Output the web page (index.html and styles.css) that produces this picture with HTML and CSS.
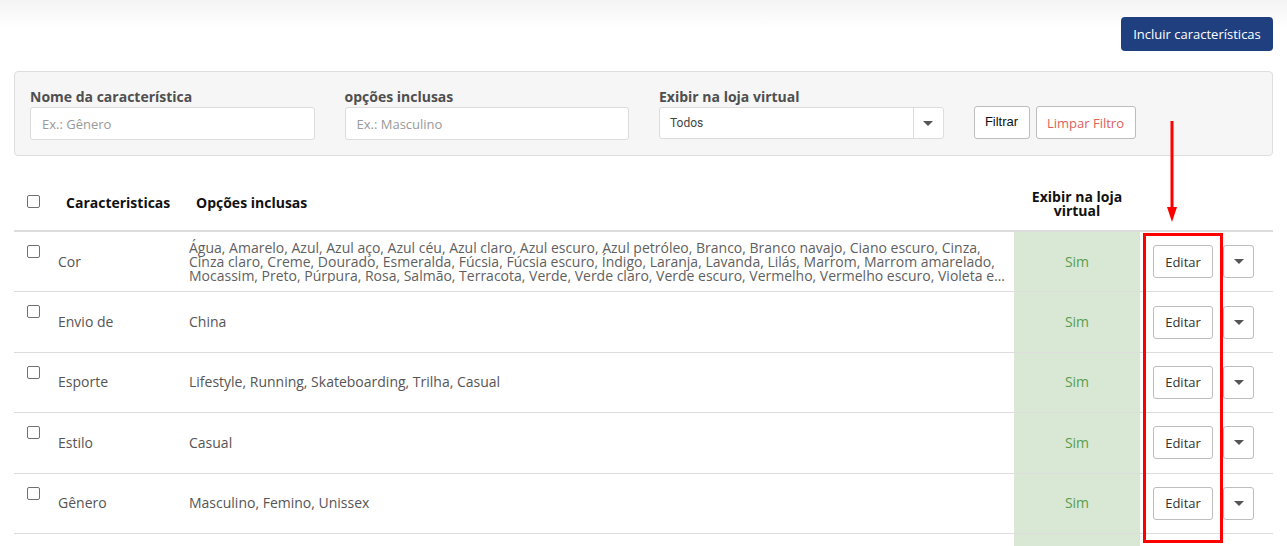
FILE: index.html
```html
<!DOCTYPE html>
<html lang="pt-BR">
<head>
  <meta charset="UTF-8">
  <meta name="viewport" content="width=device-width, initial-scale=1.0">
  <title>Características</title>
  <link rel="stylesheet" href="styles.css">
</head>
<body>
  <div class="page">
    <div class="toolbar">
      <button class="btn-primary">Incluir características</button>
    </div>

    <form class="filters">
      <div class="field">
        <label for="nome">Nome da característica</label>
        <input type="text" id="nome" placeholder="Ex.: Gênero">
      </div>
      <div class="field">
        <label for="opcoes">opções inclusas</label>
        <input type="text" id="opcoes" placeholder="Ex.: Masculino">
      </div>
      <div class="field">
        <label>Exibir na loja virtual</label>
        <div class="select">
          <span class="select-value">Todos</span>
          <span class="select-caret"><span class="caret"></span></span>
        </div>
      </div>
      <div class="filter-actions">
        <button type="button" class="btn btn-filter">Filtrar</button>
        <button type="button" class="btn btn-clear">Limpar Filtro</button>
      </div>
    </form>

    <table class="grid">
      <colgroup>
        <col class="c-check">
        <col class="c-name">
        <col class="c-options">
        <col class="c-show">
        <col class="c-actions">
      </colgroup>
      <thead>
        <tr>
          <th class="check"><input type="checkbox"></th>
          <th>Caracteristicas</th>
          <th>Opções inclusas</th>
          <th class="center">Exibir na loja<br>virtual</th>
          <th></th>
        </tr>
      </thead>
      <tbody>
        <tr>
          <td class="check"><input type="checkbox"></td>
          <td>Cor</td>
          <td><div class="clamp">Água, Amarelo, Azul, Azul aço, Azul céu, Azul claro, Azul escuro, Azul petróleo, Branco, Branco navajo, Ciano escuro, Cinza, Cinza claro, Creme, Dourado, Esmeralda, Fúcsia, Fúcsia escuro, Índigo, Laranja, Lavanda, Lilás, Marrom, Marrom amarelado, Mocassim, Preto, Púrpura, Rosa, Salmão, Terracota, Verde, Verde claro, Verde escuro, Vermelho, Vermelho escuro, Violeta e Xadrez</div></td>
          <td class="show">Sim</td>
          <td class="actions"><div class="btn-row"><button class="btn btn-edit">Editar</button><button class="btn btn-more"><span class="caret"></span></button></div></td>
        </tr>
        <tr>
          <td class="check"><input type="checkbox"></td>
          <td>Envio de</td>
          <td>China</td>
          <td class="show">Sim</td>
          <td class="actions"><div class="btn-row"><button class="btn btn-edit">Editar</button><button class="btn btn-more"><span class="caret"></span></button></div></td>
        </tr>
        <tr>
          <td class="check"><input type="checkbox"></td>
          <td>Esporte</td>
          <td>Lifestyle, Running, Skateboarding, Trilha, Casual</td>
          <td class="show">Sim</td>
          <td class="actions"><div class="btn-row"><button class="btn btn-edit">Editar</button><button class="btn btn-more"><span class="caret"></span></button></div></td>
        </tr>
        <tr>
          <td class="check"><input type="checkbox"></td>
          <td>Estilo</td>
          <td>Casual</td>
          <td class="show">Sim</td>
          <td class="actions"><div class="btn-row"><button class="btn btn-edit">Editar</button><button class="btn btn-more"><span class="caret"></span></button></div></td>
        </tr>
        <tr>
          <td class="check"><input type="checkbox"></td>
          <td>Gênero</td>
          <td>Masculino, Femino, Unissex</td>
          <td class="show">Sim</td>
          <td class="actions"><div class="btn-row"><button class="btn btn-edit">Editar</button><button class="btn btn-more"><span class="caret"></span></button></div></td>
        </tr>
        <tr>
          <td class="check"><input type="checkbox"></td>
          <td>Tamanho</td>
          <td>34, 35, 36, 37, 38, 39, 40, 41, 42</td>
          <td class="show">Sim</td>
          <td class="actions"><div class="btn-row"><button class="btn btn-edit">Editar</button><button class="btn btn-more"><span class="caret"></span></button></div></td>
        </tr>
      </tbody>
    </table>
  </div>

  <!-- marcação em vermelho sobre a coluna de ações -->
  <svg class="mark-arrow" width="20" height="106" viewBox="0 0 20 106">
    <line x1="10" y1="0" x2="10" y2="90" stroke="#ff0000" stroke-width="3"/>
    <polygon points="5,86 15,86 10,101" fill="#ff0000"/>
  </svg>
  <div class="mark-box"></div>
</body>
</html>
```

FILE: styles.css
```css
html, body {
  margin: 0;
  height: 100%;
  overflow: hidden;
}
body {
  font-family: "Open Sans", Arial, sans-serif;
  font-size: 14px;
  color: #555;
  background: linear-gradient(#f4f4f4 0, #ffffff 28px) no-repeat;
  position: relative;
}
.page {
  padding: 17px 14px 0 14px;
}
.toolbar {
  display: flex;
  justify-content: flex-end;
}
.btn-primary {
  height: 34px;
  width: 152px;
  border: 0;
  border-radius: 4px;
  background-color: #1f3f7f;
  color: #fff;
  font-family: "Open Sans", Arial, sans-serif;
  font-size: 13px;
  padding: 0;
}

.filters {
  margin-top: 20px;
  background-color: #f6f6f6;
  border: 1px solid #dedede;
  border-radius: 4px;
  padding: 16px 15px 15px 15px;
  display: flex;
  align-items: flex-end;
  gap: 30px;
}
.field {
  width: 284.5px;
}
.field label {
  display: block;
  font-weight: 700;
  font-size: 14px;
  line-height: 18px;
  color: #4f4f4f;
  margin-bottom: 1px;
}
.field input {
  box-sizing: border-box;
  width: 100%;
  height: 33px;
  border: 1px solid #dcdcdc;
  border-radius: 3px;
  padding: 0 11px;
  font-family: "Open Sans", Arial, sans-serif;
  font-size: 13px;
  background: #fff;
}
.field input::placeholder {
  color: #999;
}
.select {
  box-sizing: border-box;
  height: 32px;
  margin-bottom: 1px;
  border: 1px solid #dcdcdc;
  border-radius: 3px;
  background: #fff;
  display: flex;
  align-items: center;
}
.select-value {
  flex: 1;
  padding-left: 10px;
  font-family: Roboto, Arial, sans-serif;
  font-size: 12px;
  color: #444;
}
.select-caret {
  width: 29px;
  height: 100%;
  border-left: 1px solid #dcdcdc;
  display: flex;
  align-items: center;
  justify-content: center;
}
.caret {
  width: 0;
  height: 0;
  border-left: 5px solid transparent;
  border-right: 5px solid transparent;
  border-top: 5px solid #555;
}
.filter-actions {
  display: flex;
  gap: 6px;
  margin-bottom: 1px;
}
.btn {
  box-sizing: border-box;
  height: 33px;
  background: #fff;
  border: 1px solid #bdbdbd;
  border-radius: 3px;
  padding: 0;
  font-family: "Open Sans", Arial, sans-serif;
  font-size: 13px;
}
.btn-filter {
  width: 56px;
  font-family: "Liberation Sans", Arial, sans-serif;
  color: #111;
  padding-bottom: 3px;
}
.btn-clear {
  width: 100px;
  color: #e0605a;
}

.grid {
  width: 100%;
  margin-top: 19px;
  border-collapse: separate;
  border-spacing: 0;
  table-layout: fixed;
}
.c-check { width: 36px; }
.c-name { width: 131px; }
.c-show { width: 126px; }
.c-actions { width: 133px; }
.grid th, .grid td {
  box-sizing: border-box;
  padding: 0 8px;
  text-align: left;
  vertical-align: middle;
}
.grid th {
  height: 57px;
  padding-left: 16px;
  border-bottom: 2px solid #ddd;
  color: #111;
  font-weight: 700;
  font-size: 14px;
  line-height: 14px;
}
.grid th:nth-child(3) {
  padding-left: 15px;
}
.grid td {
  height: 60.4px;
  border-bottom: 1px solid #ddd;
  line-height: 14px;
  color: #555;
}
.grid .check {
  padding-left: 13px;
  vertical-align: top;
}
.grid th.check {
  vertical-align: middle;
  padding-left: 13px;
}
.grid th.center {
  text-align: center;
  padding: 2px 0 0 0;
}
.grid td.check {
  padding-top: 13px;
}
input[type="checkbox"] {
  appearance: none;
  box-sizing: border-box;
  width: 13px;
  height: 13px;
  margin: 0;
  border: 1px solid #707070;
  border-radius: 2px;
  background: #fff;
  display: block;
}
.grid th.check input {
  margin-top: -2px;
}
.clamp {
  display: -webkit-box;
  -webkit-line-clamp: 3;
  -webkit-box-orient: vertical;
  overflow: hidden;
  padding-top: 3px;
  margin-top: -3px;
  color: #5f5f5f;
}
.grid td.show {
  background-color: #d8e8d5;
  color: #5b9c4c;
  text-align: center;
}
.grid td.actions {
  padding-left: 13px;
}
.btn-row {
  display: flex;
  gap: 10px;
}
.btn-edit {
  width: 60px;
  color: #333;
}
.btn-more {
  width: 31px;
  display: flex;
  align-items: center;
  justify-content: center;
}

.mark-arrow {
  position: absolute;
  left: 1162px;
  top: 121px;
}
.mark-box {
  position: absolute;
  left: 1143px;
  top: 233px;
  width: 80px;
  height: 310px;
  box-sizing: border-box;
  border: 3px solid #ff0000;
}
```
